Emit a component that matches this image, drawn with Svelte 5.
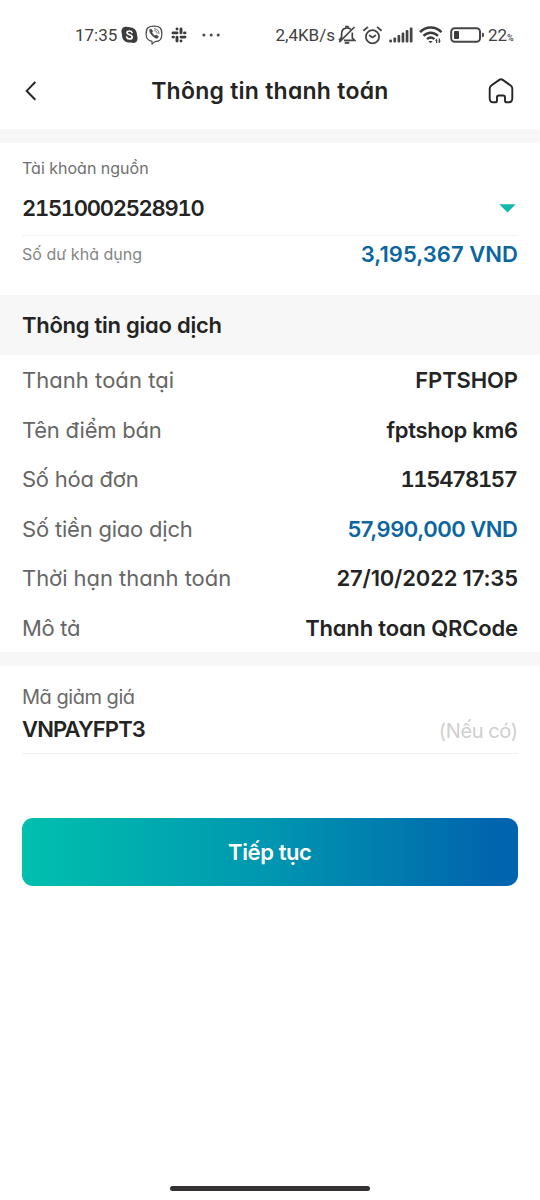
<script>
  const rows = [
    { label: 'Thanh toán tại', ls: 0.04, value: 'FPTSHOP', vs: -0.13 },
    { label: 'Tên điểm bán', ls: -0.23, value: 'fptshop km6', vs: -0.3 },
    { label: 'Số hóa đơn', ls: -0.25, value: '115478157', vs: -1.32, tabular: true },
    { label: 'Số tiền giao dịch', ls: -0.2, value: '57,990,000 VND', vs: -0.47, money: true },
    { label: 'Thời hạn thanh toán', ls: -0.05, value: '27/10/2022 17:35', vs: -0.17 },
    { label: 'Mô tả', ls: -0.3, value: 'Thanh toan QRCode', vs: -0.17 }
  ];
  const bars = [3, 5, 7.5, 10, 12.5, 15];
</script>

{#snippet text(value, spacing, kind)}
  <span class="text {kind}" style="--ls:{spacing}px">{value}</span>
{/snippet}

<main class="screen">
  <div class="status">
    <span class="clock">17:35</span>
    <svg class="skype" width="17" height="18" viewBox="0 0 17 18">
      <path d="M4.800.8c1.300 0 2.200.4 3.700.4 4.300 0 7.500 2.900 7.500 7.600 0 1.200.6 1.900.6 3.700 0 2.600-1.800 4.500-4.400 4.500-1.500 0-2.200-.4-3.700-.4C4.100 16.600 1 13.500 1 9.200 1 7.900.4 7 .4 5.300.4 2.700 2.200.8 4.800.8z" fill="#3c3c3c" />
      <path d="M11 6.500C10.600 5.400 9.800 5 8.500 5 7 5 6 5.700 6 6.800c0 2.600 5.200 1.300 5.200 4.100 0 1.200-1.100 2-2.700 2-1.500 0-2.500-.7-2.800-1.900" fill="none" stroke="#fff" stroke-width="1.700" stroke-linecap="round" />
    </svg>
    <svg class="viber" width="18" height="20" viewBox="0 0 18 20" fill="none" stroke="#484848" stroke-linecap="round" stroke-linejoin="round">
      <path d="M9 1.200c5.500 0 7.900 1.600 7.900 7.700s-2.400 7.600-6.900 7.700l-3 2.500v-2.800C3 15.600 1.100 13.800 1.100 8.900 1.100 2.800 3.500 1.200 9 1.200z" stroke-width="1.200" />
      <path d="M5.100 4.600l1.100-.5 1.500 2.100-.8 1.300c.6 1.600 1.600 2.600 3 3.300l1.300-.8 2.200 1.500-.8 1.600c-.6.4-1.500.2-2.500-.4C7.600 11.300 6.100 9.700 5 7.300c-.5-1.200-.6-2 .1-2.700z" fill="#484848" stroke-width=".6" />
      <path d="M9.400 3.800c2.900.1 4.500 1.700 4.600 4.700M9.700 5.700c1.500.1 2.300 1 2.400 2.500" stroke-width=".8" />
    </svg>
    <svg class="slack" width="16" height="16" viewBox="0 0 16 16" fill="none" stroke="#3c3c3c" stroke-width="2.900" stroke-linecap="round">
      <path d="M6 2v.1M6 5.900H2M10 2v3.900M14 5.900h-.5M10 13.900v.1M10 10.100h4M6 10.100V14M2 10.100h.5" />
    </svg>
    <svg class="more" width="18" height="4" viewBox="0 0 18 4" fill="#484848">
      <circle cx="1.900" cy="2" r="1.500" /><circle cx="9.200" cy="2" r="1.500" /><circle cx="16.200" cy="2" r="1.500" />
    </svg>

    <span class="speed">2,4KB/s</span>
    <svg class="bell" width="18" height="20" viewBox="0 0 18 20" fill="none" stroke="#454545" stroke-width="1.700">
      <path d="M3.600 13V9c0-3.200 1.700-5.500 4.400-5.800V1.500h2v1.700c1.300.1 2.300.7 3 1.500M14.300 7.500V13l2.300 2.300H6" />
      <path d="M16.500 2L1.300 17.200M3.500 12.500L1 15.400" />
      <path d="M6.700 17.800h4.600" stroke-width="2" />
    </svg>
    <svg class="alarm" width="19" height="19" viewBox="0 0 19 19" fill="none" stroke="#454545" stroke-width="1.800" stroke-linecap="round">
      <circle cx="9.500" cy="10.700" r="6.600" /><path d="M6.700 9.500l2.800 2 2.800-2M1 4.300l3.400-2.900M18 4.300l-3.400-2.900" />
    </svg>
    <svg class="signal" width="24" height="16" viewBox="0 0 24 16" fill="#454545">
      {#each bars as h, i}
        <rect x={0.3 + i * 4.1} y={15.5 - h} width="2.700" height={h} rx="1" />
      {/each}
    </svg>
    <svg class="wifi" width="24" height="18" viewBox="0 0 24 18" fill="none" stroke="#3c3c3c" stroke-width="2.500">
      <path d="M1 6.200C7.200-.1 16.300-.1 22.500 6.200M4.500 9.800c4.300-4.200 10.200-4.200 14.500 0M8 13.200c2.300-2.100 5.100-2.100 7.400-.1" />
      <path d="M9.300 15h4.400l-2.200 2.300z" fill="#3c3c3c" stroke="none" />
      <path d="M17.600 17v-3M20.300 12.500v4" stroke-width="1.200" /><path d="M15.900 14.800l2.200-2.600v2.600zM19.800 17.500l2.200-2.700h-2.200z" fill="#3c3c3c" stroke="none" />
    </svg>
    <svg class="battery" width="35" height="16" viewBox="0 0 35 16">
      <rect x="1.200" y="1.200" width="28.800" height="13.500" rx="3.500" fill="none" stroke="#454545" stroke-width="2" />
      <rect x="4" y="4" width="5" height="8" rx=".7" fill="#3c3c3c" />
      <path d="M32 5.700c1.200 0 1.900.5 1.900 1.200v2.200c0 .7-.7 1.200-1.900 1.200z" fill="#454545" />
    </svg>
    <span class="level">22</span><span class="percent">%</span>
  </div>

  <header>
    <svg width="12" height="20" viewBox="0 0 12 20"><path d="M10.300 1L1.700 9.900l8.600 8.900" fill="none" stroke="#262626" stroke-width="2" /></svg>
    {@render text('Thông tin thanh toán', 0.25, 'title')}
    <svg width="26" height="26" viewBox="0 0 26 26" fill="none" stroke="#262626" stroke-width="1.900" stroke-linejoin="round">
      <path d="M11.300 1.900a3 3 0 0 1 3.400 0l8 5.600c1.200.9 1.600 1.900 1.600 3.300v9.500c0 2.600-1.200 4-3.400 4h-2c-1.100 0-1.900-.7-1.900-1.900v-3c0-1.300-.6-1.900-1.900-1.900h-4.200c-1.300 0-1.900.6-1.900 1.900v3c0 1.200-.8 1.900-1.900 1.900h-2c-2.200 0-3.400-1.400-3.400-4v-9.500c0-1.400.4-2.400 1.600-3.300z" />
    </svg>
  </header>

  <section class="account">
    <div class="caption">{@render text('Tài khoản nguồn', 0, 'small')}</div>
    <div class="line number">
      {@render text('21510002528910', -1.28, 'strong tabular')}
      <svg width="17" height="9" viewBox="0 0 17 9"><path d="M.3.300h16.400L8.500 8.500z" fill="#10b9ab" /></svg>
    </div>
    <div class="line balance">
      {@render text('Số dư khả dụng', 0.04, 'small faint')}
      {@render text('3,195,367 VND', 0.05, 'strong money')}
    </div>
  </section>

  <h2>{@render text('Thông tin giao dịch', -0.26, 'strong')}</h2>

  <section class="details">
    {#each rows as r}
      <div class="line">
        {@render text(r.label, r.ls, 'label')}
        {@render text(r.value, r.vs, 'strong' + (r.money ? ' money' : '') + (r.tabular ? ' tabular' : ''))}
      </div>
    {/each}
  </section>

  <section class="voucher">
    <div class="caption">{@render text('Mã giảm giá', -0.48, 'medium')}</div>
    <div class="line code">
      {@render text('VNPAYFPT3', -0.87, 'strong')}
      {@render text('(Nếu có)', -0.4, 'hint')}
    </div>
  </section>

  <button>{@render text('Tiếp tục', -0.4, 'action')}</button>
  <div class="handle"></div>
</main>

<style>
  :global(body) { margin: 0; background: #fff; }
  .screen {
    box-sizing: border-box; width: 540px; height: 1200px; overflow: hidden;
    display: flex; flex-direction: column; background: #fff;
    font-family: Inter, sans-serif; font-feature-settings: 'cv11'; font-size: 22px; line-height: 24px; color: #242424;
  }
  svg { display: block; flex: none; }
  .text { letter-spacing: var(--ls); margin-right: calc(-1 * var(--ls)); white-space: nowrap; }
  .strong { font-weight: 580; }
  .title { font-size: 23px; font-weight: 590; }
  .label { color: #666; }
  .small { font-size: 16px; color: #707070; }
  .faint { color: #858585; }
  .medium { font-size: 20px; color: #6a6a6a; }
  .hint { font-size: 20px; color: #cfcfcf; padding-top: 3px; }
  .money { color: #0b659f; }
  .tabular { font-feature-settings: 'cv11', 'tnum'; }
  .action { color: #fff; font-weight: 600; }

  .status {
    height: 71px; flex: none; box-sizing: border-box; display: flex; align-items: center; padding: 0 0 0.500px 75px;
    font-family: Roboto, sans-serif; font-feature-settings: normal; font-size: 17px; color: #404040;
  }
  .clock { width: 42.3px; }
  .skype { margin-left: 3.7px; }
  .viber { margin-left: 7.5px; }
  .slack { margin-left: 8px; }
  .more { margin-left: 15px; }
  .speed { margin-left: 55px; width: 59.500px; }
  .bell { margin-left: 3.500px; }
  .alarm { margin-left: 7px; }
  .signal { margin-left: 6.500px; }
  .wifi { margin-left: 6px; }
  .battery { margin-left: 7px; }
  .level { margin-left: 3px; }
  .percent { font-size: 9px; font-weight: 500; padding-top: 5px; }

  header {
    height: 58px; flex: none; box-sizing: border-box; padding: 0 26.500px 18px 25px;
    display: flex; align-items: center; justify-content: space-between;
  }
  header .title { margin-left: 15px; }
  .account { height: 165.500px; flex: none; box-sizing: border-box; border-top: 14px solid #f7f7f7; padding: 11px 22px 0; }
  .caption { height: 24px; }
  .account .caption { height: 26px; }
  .line { display: flex; align-items: center; justify-content: space-between; }
  .number { height: 54px; border-bottom: 1px solid #f4f4f4; padding: 1px 2.500px 0 0; }
  .balance { height: 36px; }
  h2 {
    margin: 0; height: 60.500px; flex: none; box-sizing: border-box; padding: 1px 22px 0; background: #f7f7f7;
    display: flex; align-items: center; font-size: 22px; font-weight: 600;
  }
  .details { height: 297px; box-sizing: border-box; padding: 0.400px 22px 0; flex: none; }
  .details .line { height: 49.500px; }
  .voucher { border-top: 14px solid #f7f7f7; padding: 17.500px 22px 0; flex: none; }
  .code { height: 43px; padding-bottom: 2px; border-bottom: 1px solid #f2f2f2; }
  button {
    margin: 64px 22px 0; height: 68px; flex: none; border: 0; border-radius: 11px; padding: 0;
    background: linear-gradient(90deg, #00c0ae, #0096b0 50%, #0064ae 96%); font: inherit; font-feature-settings: inherit;
  }
  .handle { width: 200px; height: 5px; border-radius: 3px; background: #343233; margin: auto auto 9px 170px; }
</style>
